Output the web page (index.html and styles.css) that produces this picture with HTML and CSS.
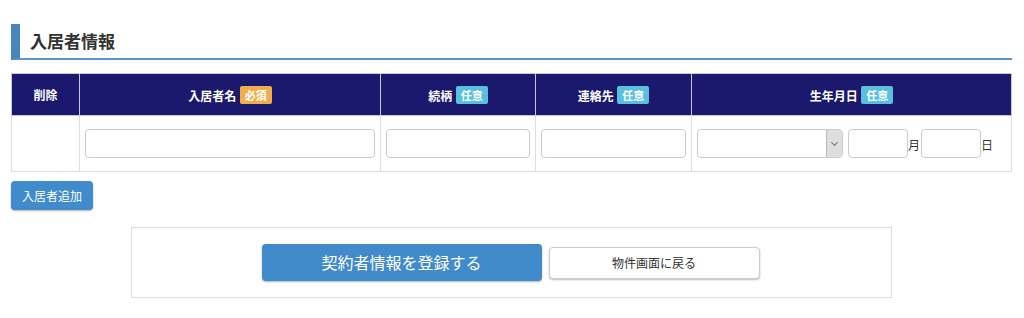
FILE: index.html
```html
<!DOCTYPE html>
<html lang="ja">
<head>
  <meta charset="utf-8">
  <title>入居者情報</title>
  <link rel="stylesheet" href="styles.css">
</head>
<body>
  <div class="page">
    <h2 class="ttl">入居者情報</h2>

    <table class="tbl">
      <thead>
        <tr>
          <th class="c-del">削除</th>
          <th class="c-name">入居者名 <span class="tag tag-req">必須</span></th>
          <th class="c-rel">続柄 <span class="tag tag-opt">任意</span></th>
          <th class="c-tel">連絡先 <span class="tag tag-opt">任意</span></th>
          <th class="c-birth">生年月日 <span class="tag tag-opt">任意</span></th>
        </tr>
      </thead>
      <tbody>
        <tr>
          <td></td>
          <td><input class="entrada"></td>
          <td><input class="entrada"></td>
          <td><input class="entrada"></td>
          <td>
            <div class="birth">
              <div class="sel"><span class="arrow"></span></div>
              <input class="entrada small">
              <span class="unit">月</span>
              <input class="entrada small">
              <span class="unit">日</span>
            </div>
          </td>
        </tr>
      </tbody>
    </table>

    <a href="#" class="btn btn-add">入居者追加</a>

    <div class="actions">
      <a href="#" class="btn btn-main">契約者情報を登録する</a>
      <a href="#" class="btn btn-back">物件画面に戻る</a>
    </div>
  </div>
</body>
</html>
```

FILE: styles.css
```css
*{
  margin: 0;
  padding: 0;
  box-sizing: border-box;
  font-family: "Noto Sans CJK JP", "Noto Sans", sans-serif;
}

body{
  background: #fff;
  color: #333;
}

a{
  text-decoration: none;
  display: inline-block;
}

.page{
  width: 1001px;
  margin: 0 0 0 11px;
  padding-top: 24px;
}

.ttl{
  font-size: 17px;
  font-weight: bold;
  color: #333;
  line-height: 33px;
  height: 36px;
  padding-left: 10px;
  border-left: 9px solid #4a86be;
  border-bottom: 2px solid #5b94c9;
}

.tbl{
  margin-top: 13px;
  width: 1001px;
  border-collapse: collapse;
  table-layout: fixed;
}

.tbl th,
.tbl td{
  border: 1px solid #ddd;
}

.tbl th{
  background: #1b196e;
  color: #fff;
  font-size: 12px;
  font-weight: bold;
  height: 42px;
  text-align: center;
  border-color: #c9c9d8;
}

.tbl td{
  height: 56px;
  padding: 0 5px;
}

.c-del{ width: 68px; }
.c-name{ width: 301px; }
.c-rel{ width: 155px; }
.c-tel{ width: 156px; }

.tag{
  display: inline-block;
  font-size: 11px;
  font-weight: bold;
  color: #fff;
  padding: 0 5px;
  line-height: 18px;
  border-radius: 2px;
  margin-left: 1px;
  vertical-align: 1px;
}

.tag-req{ background: #f0ad4e; }
.tag-opt{ background: #5bc0de; }

.entrada{
  display: block;
  width: 100%;
  height: 29px;
  border: 1px solid #ccc;
  border-radius: 4px;
  outline: none;
  background: #fff;
}

.birth{
  display: flex;
  align-items: center;
}

.sel{
  width: 146px;
  height: 29px;
  border: 1px solid #ccc;
  border-radius: 4px;
  display: flex;
  justify-content: flex-end;
  margin-right: 5px;
  overflow: hidden;
}

.arrow{
  width: 16px;
  height: 100%;
  background: #dedede;
  border-left: 1px solid #bbb;
  position: relative;
}

.arrow::after{
  content: "";
  position: absolute;
  left: 5px;
  top: 10px;
  width: 4px;
  height: 4px;
  border-right: 1px solid #777;
  border-bottom: 1px solid #777;
  transform: rotate(45deg);
}

.entrada.small{
  width: 60px;
}

.unit{
  font-size: 12px;
  color: #333;
  width: 13px;
  padding-top: 2px;
}

.btn{
  font-size: 12px;
  border-radius: 4px;
  text-align: center;
}

.btn-add{
  margin-top: 9px;
  background: #3f8bcc;
  color: #fff;
  width: 82px;
  height: 29px;
  line-height: 29px;
  box-shadow: 0 1px 2px rgba(0,0,0,0.3);
}

.actions{
  width: 761px;
  height: 71px;
  margin: 17px auto 0;
  border: 1px solid #ddd;
  display: flex;
  align-items: center;
  justify-content: center;
  gap: 7px;
  padding-right: 2px;
}

.btn-main{
  width: 280px;
  height: 37px;
  line-height: 37px;
  font-size: 16px;
  background: #428bca;
  color: #fff;
  box-shadow: 0 1px 2px rgba(0,0,0,0.3);
}

.btn-back{
  width: 211px;
  height: 32px;
  line-height: 30px;
  background: #fff;
  color: #333;
  border: 1px solid #ccc;
  box-shadow: 0 1px 2px rgba(0,0,0,0.25);
}
```
